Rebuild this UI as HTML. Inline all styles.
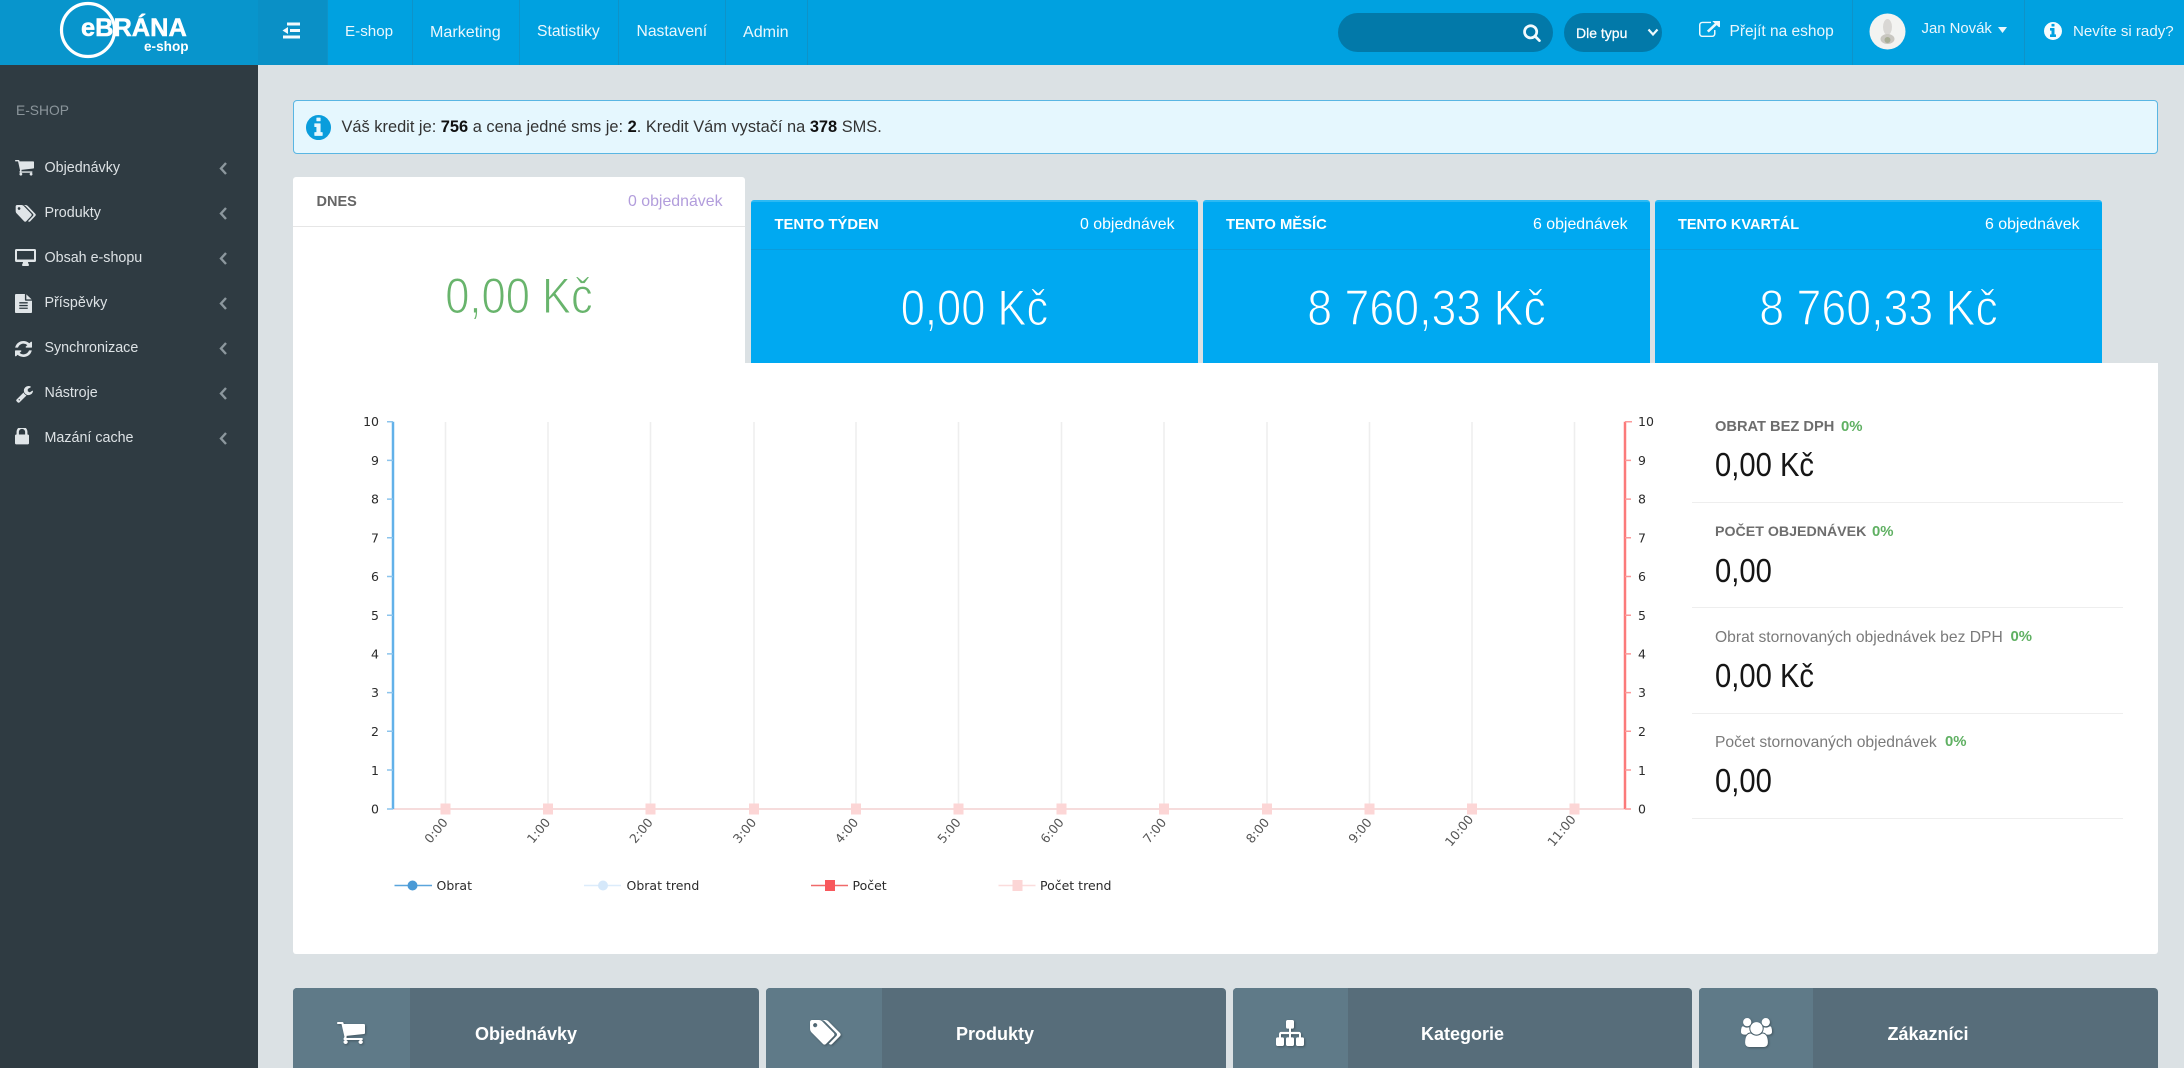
<!DOCTYPE html>
<html lang="cs">
<head>
<meta charset="utf-8">
<title>eBRÁNA e-shop</title>
<style>
html,body{margin:0;padding:0;width:2184px;height:1068px;overflow:hidden;background:#dbe1e4;font-family:"Liberation Sans",Arial,sans-serif;}
.b{position:absolute;box-sizing:border-box;}
.t{position:absolute;white-space:nowrap;line-height:1;}
.w{color:#fff;}
svg.i{position:absolute;display:block;}
.side{color:#dde2e5;font-size:14.3px;left:44.5px;}
.stat{font-size:14.4px;font-weight:bold;color:#6d6d6d;left:1715px;}
.stat2{font-size:15.65px;color:#7a7a7a;left:1715px;}
.pct{font-size:14.9px;font-weight:bold;color:#5fb062;}
.val{font-size:33px;color:#151515;left:1715px;transform:scaleX(.885);transform-origin:left center;}
.big{font-size:50px;text-align:center;}
.cap{font-size:14.8px;font-weight:bold;color:#fff;}
.cnt{font-size:15.9px;color:#fff;}
.tab{font-size:15.7px;color:#eaf7fd;top:24px;}
.sep{position:absolute;top:0;height:65px;width:1px;background:#0e93c8;}
.lbl{font-size:18px;font-weight:bold;color:#fff;top:1025px;}
.blue{background:#00a9f1;border-top:2px solid #2cb9f3;border-radius:3px 3px 0 0;}
.hline{position:absolute;height:1px;background:#0a9cdc;}
.sline{position:absolute;left:1692px;width:431px;height:1px;background:#eeeeee;}
</style>
</head>
<body>

<!-- header -->
<div class="b" style="left:0;top:0;width:2184px;height:65px;background:#00a1e0;"></div>
<div class="b" style="left:0;top:0;width:258px;height:65px;background:#0895cc;"></div>
<div class="b" style="left:258px;top:0;width:69px;height:65px;background:#0a90c6;"></div>
<svg class="i" style="left:55px;top:0;" width="70" height="62" viewBox="0 0 70 62"><circle cx="33" cy="30" r="26.5" fill="none" stroke="#fff" stroke-width="3.2"/></svg>
<div class="t w" style="left:81px;top:15.500px;font-size:25.4px;font-weight:bold;-webkit-text-stroke:.5px #fff;">eBRÁNA</div>
<div class="t w" style="left:144px;top:39.5px;font-size:13.6px;font-weight:bold;">e-shop</div>
<svg class="i" style="left:282px;top:22px;" width="19" height="17" viewBox="0 0 19 17" fill="#f2fafd"><rect x="5" y="0.500" width="13" height="3"/><rect x="8" y="7" width="10" height="3"/><rect x="1" y="13.500" width="17" height="3"/><path d="M6 5v7L0.500 8.500z"/></svg>

<div class="sep" style="left:327px"></div><div class="sep" style="left:412px"></div><div class="sep" style="left:519px"></div><div class="sep" style="left:618px"></div><div class="sep" style="left:725px"></div><div class="sep" style="left:807px"></div>
<div class="t tab" style="left:345px;font-size:15.2px;">E-shop</div>
<div class="t tab" style="left:430px;font-size:16.1px;">Marketing</div>
<div class="t tab" style="left:537px;">Statistiky</div>
<div class="t tab" style="left:636.500px;">Nastavení</div>
<div class="t tab" style="left:743px;font-size:16.1px;">Admin</div>

<div class="b" style="left:1338px;top:13px;width:215px;height:39px;border-radius:20px;background:#0279a9;"></div>
<svg class="i" style="left:1522px;top:23px;" width="20" height="19" viewBox="0 0 1792 1792" fill="#f2fafd"><path d="M1216 832q0-185-131.500-316.500t-316.500-131.500-316.500 131.500-131.500 316.500 131.500 316.500 316.500 131.500 316.500-131.500 131.500-316.500zm512 832q0 52-38 90t-90 38q-54 0-90-38l-343-342q-179 124-399 124-143 0-273.500-55.500t-225-150-150-225-55.500-273.500 55.500-273.500 150-225 225-150 273.500-55.500 273.500 55.500 225 150 150 225 55.500 273.500q0 220-124 399l343 343q37 37 37 90z"/></svg>
<div class="b" style="left:1564px;top:13px;width:98px;height:39px;border-radius:20px;background:#0279a9;"></div>
<div class="t w" style="left:1576px;top:26px;font-size:14px;-webkit-text-stroke:.25px #fff;">Dle typu</div>
<svg class="i" style="left:1647px;top:28px;" width="12" height="9" viewBox="0 0 12 9"><path d="M1.500 1.500L6 6.500l4.500-5" fill="none" stroke="#eef8fc" stroke-width="2.200"/></svg>
<svg class="i" style="left:1699px;top:21px;" width="21" height="16" viewBox="0 64 1792 1472" preserveAspectRatio="none" fill="#eef8fc"><path d="M1408 928v320q0 119-84.500 203.500t-203.500 84.500h-832q-119 0-203.500-84.500t-84.500-203.500v-832q0-119 84.500-203.500t203.500-84.500h704q14 0 23 9t9 23v64q0 14-9 23t-23 9h-704q-66 0-113 47t-47 113v832q0 66 47 113t113 47h832q66 0 113-47t47-113v-320q0-14 9-23t23-9h64q14 0 23 9t9 23zm384-864v512q0 26-19 45t-45 19-45-19l-176-176-652 652q-10 10-23 10t-23-10l-114-114q-10-10-10-23t10-23l652-652-176-176q-19-19-19-45t19-45 45-19h512q26 0 45 19t19 45z"/></svg>
<div class="t" style="left:1729.500px;top:24px;font-size:15.5px;color:#eaf7fd;">Přejít na eshop</div>
<div class="sep" style="left:1852px"></div><div class="sep" style="left:2024px"></div>
<svg class="i" style="left:1869px;top:13px;" width="37" height="37" viewBox="0 0 37 37"><circle cx="18.500" cy="18.500" r="18" fill="#f3f3f1"/><ellipse cx="18.500" cy="14" rx="4.500" ry="8" fill="#d9d7d4"/><ellipse cx="18.500" cy="26" rx="7" ry="5" fill="#c9c7c1"/><circle cx="18.500" cy="27" r="3" fill="#a8ad96"/></svg>
<div class="t" style="left:1921.500px;top:21.500px;font-size:14.9px;color:#eaf7fd;">Jan Novák</div>
<svg class="i" style="left:1998px;top:27px;" width="9" height="6" viewBox="0 0 9 6"><path d="M0 0h9L4.500 6z" fill="#eaf7fd"/></svg>
<svg class="i" style="left:2044px;top:22px;" width="18" height="18" viewBox="128 128 1536 1536" fill="#f6fcfe"><path d="M1152 1376v-160q0-14-9-23t-23-9h-96v-512q0-14-9-23t-23-9h-320q-14 0-23 9t-9 23v160q0 14 9 23t23 9h96v320h-96q-14 0-23 9t-9 23v160q0 14 9 23t23 9h448q14 0 23-9t9-23zm-128-896v-160q0-14-9-23t-23-9h-192q-14 0-23 9t-9 23v160q0 14 9 23t23 9h192q14 0 23-9t9-23zm640 416q0 209-103 385.500t-279.500 279.500-385.500 103-385.500-103-279.500-279.500-103-385.500 103-385.500 279.500-279.500 385.500-103 385.500 103 279.500 279.500 103 385.500z"/></svg>
<div class="t" style="left:2073px;top:24px;font-size:15.1px;color:#eaf7fd;">Nevíte si rady?</div>

<!-- sidebar -->
<div class="b" style="left:0;top:65px;width:258px;height:1003px;background:#2f3b42;"></div>
<div class="t" style="left:16px;top:104px;font-size:13.8px;color:#8b959b;">E-SHOP</div>

<svg class="i" style="left:15px;top:160px;" width="19" height="17" viewBox="0 128 1664 1536" preserveAspectRatio="none" fill="#e0e5e8"><path d="M640 1408q0 52-38 90t-90 38-90-38-38-90 38-90 90-38 90 38 38 90zm896 0q0 52-38 90t-90 38-90-38-38-90 38-90 90-38 90 38 38 90zm128-1088v512q0 24-16.500 42.500t-40.500 21.500l-1044 122q13 60 13 70 0 16-24 64h920q26 0 45 19t19 45-19 45-45 19h-1024q-26 0-45-19t-19-45q0-11 8-31.500t16-36 21.500-40 15.500-29.500l-177-823h-204q-26 0-45-19t-19-45 19-45 45-19h256q16 0 28.500 6.500t19.500 15.500 13 24.500 8 26 5.500 29.500 4.500 26h1201q26 0 45 19t19 45z"/></svg>
<div class="t side" style="top:160.500px;">Objednávky</div>
<svg class="i" style="left:15px;top:205px;" width="21" height="17" viewBox="0 128 1984 1536" preserveAspectRatio="none" fill="#e0e5e8"><path d="M512 448q0-53-37.500-90.500t-90.500-37.500-90.500 37.500-37.500 90.500 37.500 90.500 90.500 37.500 90.500-37.500 37.500-90.500zm1067 576q0 53-37 90l-491 492q-39 37-91 37-53 0-90-37l-715-716q-38-37-64.500-101t-26.500-117v-416q0-52 38-90t90-38h416q53 0 117 26.500t102 64.500l715 714q37 39 37 91zm384 0q0 53-37 90l-491 492q-39 37-91 37-36 0-59-14t-53-45l470-470q37-37 37-90 0-52-37-91l-715-714q-38-38-102-64.500t-117-26.500h224q53 0 117 26.500t102 64.500l715 714q37 39 37 91z"/></svg>
<div class="t side" style="top:205.500px;">Produkty</div>
<svg class="i" style="left:15px;top:249px;" width="21" height="17" viewBox="0 0 21 17" fill="#e0e5e8"><path fill-rule="evenodd" d="M1.500 0h18A1.500 1.500 0 0 1 21 1.500v10a1.500 1.500 0 0 1-1.500 1.500H13c0 1.500 1 2.300 1 3a1 1 0 0 1-1 1H8a1 1 0 0 1-1-1c0-.7 1-1.500 1-3H1.500A1.500 1.500 0 0 1 0 11.500v-10A1.500 1.500 0 0 1 1.500 0zM2 2v8.500h17V2z"/></svg>
<div class="t side" style="top:250.500px;">Obsah e-shopu</div>
<svg class="i" style="left:15px;top:294px;" width="17" height="19" viewBox="128 0 1536 1792" preserveAspectRatio="none" fill="#e0e5e8"><path d="M1596 476q14 14 28 36h-472v-472q22 14 36 28zm-476 164h544v1056q0 40-28 68t-68 28h-1344q-40 0-68-28t-28-68v-1600q0-40 28-68t68-28h800v544q0 40 28 68t68 28zm160 736v-64q0-14-9-23t-23-9h-704q-14 0-23 9t-9 23v64q0 14 9 23t23 9h704q14 0 23-9t9-23zm0-256v-64q0-14-9-23t-23-9h-704q-14 0-23 9t-9 23v64q0 14 9 23t23 9h704q14 0 23-9t9-23zm0-256v-64q0-14-9-23t-23-9h-704q-14 0-23 9t-9 23v64q0 14 9 23t23 9h704q14 0 23-9t9-23z"/></svg>
<div class="t side" style="top:296px;">Příspěvky</div>
<svg class="i" style="left:15px;top:341px;" width="17" height="16" viewBox="128 128 1536 1536" preserveAspectRatio="none" fill="#e0e5e8"><path d="M1639 1056q0 5-1 7-64 268-268 434.500t-478 166.500q-146 0-282.500-55t-243.500-157l-129 129q-19 19-45 19t-45-19-19-45v-448q0-26 19-45t45-19h448q26 0 45 19t19 45-19 45l-137 137q71 66 161 102t187 36q134 0 250-65t186-179q11-17 53-117 8-23 30-23h192q13 0 22.500 9.500t9.500 22.500zm25-800v448q0 26-19 45t-45 19h-448q-26 0-45-19t-19-45 19-45l138-138q-148-137-349-137-134 0-250 65t-186 179q-11 17-53 117-8 23-30 23h-199q-13 0-22.500-9.500t-9.500-22.500v-7q65-268 270-434.500t480-166.500q146 0 284 55.500t245 156.500l130-129q19-19 45-19t45 19 19 45z"/></svg>
<div class="t side" style="top:341px;">Synchronizace</div>
<svg class="i" style="left:16px;top:386px;" width="17" height="17" viewBox="64 128 1664 1664" fill="#e0e5e8"><path d="M448 1472q0-26-19-45t-45-19-45 19-19 45 19 45 45 19 45-19 19-45zm644-420l-682 682q-37 37-90 37-52 0-91-37l-106-108q-38-36-38-90 0-53 38-91l681-681q39 98 114.500 173.500t173.500 114.500zm634-435q0 39-23 106-47 134-164.500 217.500t-258.500 83.500q-185 0-316.500-131.500t-131.500-316.500 131.500-316.500 316.500-131.500q58 0 121.500 16.500t107.500 46.500q16 11 16 28t-16 28l-293 169v224l193 107q5-3 79-48.500t135.500-81 70.500-35.500q15 0 23.500 10t8.500 25z"/></svg>
<div class="t side" style="top:386px;">Nástroje</div>
<svg class="i" style="left:15px;top:428px;" width="14" height="18" viewBox="320 256 1152 1408" preserveAspectRatio="none" fill="#e0e5e8"><path d="M640 768h512v-192q0-106-75-181t-181-75-181 75-75 181v192zm832 96v576q0 40-28 68t-68 28h-960q-40 0-68-28t-28-68v-576q0-40 28-68t68-28h32v-192q0-184 132-316t316-132 316 132 132 316v192h32q40 0 68 28t28 68z"/></svg>
<div class="t side" style="top:431px;">Mazání cache</div>

<svg class="i" style="left:218px;top:160px;" width="12" height="290" viewBox="0 0 12 290" fill="none" stroke="#8c979d" stroke-width="2.400">
<path d="M8 3L3 8.500l5 5.500M8 48L3 53.500l5 5.500M8 93L3 98.500l5 5.500M8 138L3 143.500l5 5.500M8 183L3 188.500l5 5.500M8 228L3 233.500l5 5.500M8 273L3 278.500l5 5.500"/></svg>

<!-- alert -->
<div class="b" style="left:293px;top:100px;width:1865px;height:54px;background:#e5f7fe;border:1px solid #59b6e3;border-radius:4px;"></div>
<svg class="i" style="left:306px;top:114.500px;" width="25" height="25" viewBox="128 128 1536 1536" fill="#0a9ddc"><path d="M1152 1376v-160q0-14-9-23t-23-9h-96v-512q0-14-9-23t-23-9h-320q-14 0-23 9t-9 23v160q0 14 9 23t23 9h96v320h-96q-14 0-23 9t-9 23v160q0 14 9 23t23 9h448q14 0 23-9t9-23zm-128-896v-160q0-14-9-23t-23-9h-192q-14 0-23 9t-9 23v160q0 14 9 23t23 9h192q14 0 23-9t9-23zm640 416q0 209-103 385.500t-279.500 279.500-385.500 103-385.500-103-279.500-279.500-103-385.500 103-385.500 279.500-279.500 385.500-103 385.500 103 279.500 279.500 103 385.500z"/></svg>
<div class="t" style="left:341.500px;top:119px;font-size:16.4px;color:#333;">Váš kredit je: <b style="color:#111">756</b> a cena jedné sms je: <b style="color:#111">2</b>. Kredit Vám vystačí na <b style="color:#111">378</b> SMS.</div>

<!-- main white panel -->
<div class="b" style="left:293px;top:363px;width:1865px;height:591px;background:#fff;border-radius:0 0 3px 3px;"></div>

<!-- DNES -->
<div class="b" style="left:293px;top:177px;width:452px;height:190px;background:#fff;border-radius:3px 3px 0 0;"></div>
<div class="b" style="left:293px;top:226px;width:452px;height:1px;background:#e6e6e6;"></div>
<div class="t" style="left:316.500px;top:194.500px;font-size:14.500px;font-weight:bold;color:#666;">DNES</div>
<div class="t" style="left:628px;top:194px;font-size:15.9px;color:#b29ddc;">0 objednávek</div>
<div class="t big" style="left:293px;width:452px;top:270.500px;color:#68b46c;transform:scaleX(.87);-webkit-text-stroke:1.1px #fff;">0,00 Kč</div>

<!-- TENTO TÝDEN -->
<div class="b blue" style="left:751px;top:200px;width:446.500px;height:163px;"></div>
<div class="hline" style="left:751px;top:249px;width:446.500px;"></div>
<div class="t cap" style="left:774.500px;top:218px;">TENTO TÝDEN</div>
<div class="t cnt" style="left:1080px;top:217px;">0 objednávek</div>
<div class="t big w" style="left:751px;width:447px;top:282.500px;transform:scaleX(.87);-webkit-text-stroke:1.1px #00a9f1;">0,00 Kč</div>

<!-- TENTO MĚSÍC -->
<div class="b blue" style="left:1203px;top:200px;width:446.500px;height:163px;"></div>
<div class="hline" style="left:1203px;top:249px;width:446.500px;"></div>
<div class="t cap" style="left:1226px;top:218px;">TENTO MĚSÍC</div>
<div class="t cnt" style="left:1533px;top:217px;">6 objednávek</div>
<div class="t big w" style="left:1203px;width:447px;top:282.500px;transform:scaleX(.894);-webkit-text-stroke:1.1px #00a9f1;">8 760,33 Kč</div>

<!-- TENTO KVARTÁL -->
<div class="b blue" style="left:1655px;top:200px;width:447px;height:163px;"></div>
<div class="hline" style="left:1655px;top:249px;width:447px;"></div>
<div class="t cap" style="left:1678px;top:218px;font-size:14.500px;">TENTO KVARTÁL</div>
<div class="t cnt" style="left:1985px;top:217px;">6 objednávek</div>
<div class="t big w" style="left:1655px;width:447px;top:282.500px;transform:scaleX(.894);-webkit-text-stroke:1.1px #00a9f1;">8 760,33 Kč</div>

<!-- chart -->
<svg class="i" style="left:340px;top:400px;" width="1330" height="510" viewBox="340 400 1330 510" font-family="'DejaVu Sans',sans-serif" font-size="12.5">
<g stroke="#eeeeee" stroke-width="1.500">
<path d="M445.500 422V809M548 422V809M650.500 422V809M754 422V809M856 422V809M958.500 422V809M1061.500 422V809M1164 422V809M1267 422V809M1369.500 422V809M1472 422V809M1574.500 422V809"/>
</g>
<path d="M393 809H1625" stroke="#f6dcdc" stroke-width="2"/>
<g fill="#fcd6d6">
<rect x="440.500" y="803.500" width="10" height="11"/><rect x="543" y="803.500" width="10" height="11"/><rect x="645.500" y="803.500" width="10" height="11"/><rect x="749" y="803.500" width="10" height="11"/><rect x="851" y="803.500" width="10" height="11"/><rect x="953.500" y="803.500" width="10" height="11"/><rect x="1056.500" y="803.500" width="10" height="11"/><rect x="1159" y="803.500" width="10" height="11"/><rect x="1262" y="803.500" width="10" height="11"/><rect x="1364.500" y="803.500" width="10" height="11"/><rect x="1467" y="803.500" width="10" height="11"/><rect x="1569.500" y="803.500" width="10" height="11"/>
</g>
<path d="M393 421.700V809" stroke="#62b1e9" stroke-width="2.500" fill="none"/>
<path d="M387 421.700h6M387 460.400h6M387 499.100h6M387 537.800h6M387 576.500h6M387 615.200h6M387 653.900h6M387 692.600h6M387 731.300h6M387 770h6M387 809h6" stroke="#8cc4ec" stroke-width="1.500" fill="none"/>
<path d="M1625 421.700V809" stroke="#fb7a7a" stroke-width="2.500" fill="none"/>
<path d="M1625 421.700h7M1625 460.400h6M1625 499.100h6M1625 537.800h6M1625 576.500h6M1625 615.200h6M1625 653.900h6M1625 692.600h6M1625 731.300h6M1625 770h6M1625 809h6" stroke="#fb9a9a" stroke-width="1.500" fill="none"/>
<g fill="#2b2b2b" text-anchor="end">
<text x="379" y="426">10</text><text x="379" y="465">9</text><text x="379" y="503.500">8</text><text x="379" y="542.500">7</text><text x="379" y="581">6</text><text x="379" y="620">5</text><text x="379" y="658.500">4</text><text x="379" y="697">3</text><text x="379" y="736">2</text><text x="379" y="775">1</text><text x="379" y="813.500">0</text>
</g>
<g fill="#2b2b2b">
<text x="1638" y="426">10</text><text x="1638" y="465">9</text><text x="1638" y="503.500">8</text><text x="1638" y="542.500">7</text><text x="1638" y="581">6</text><text x="1638" y="620">5</text><text x="1638" y="658.500">4</text><text x="1638" y="697">3</text><text x="1638" y="736">2</text><text x="1638" y="775">1</text><text x="1638" y="813.500">0</text>
</g>
<g fill="#555" text-anchor="middle">
<text transform="translate(436 830.500) rotate(-50)" y="4.500">0:00</text>
<text transform="translate(538.500 830.500) rotate(-50)" y="4.500">1:00</text>
<text transform="translate(641 830.500) rotate(-50)" y="4.500">2:00</text>
<text transform="translate(744.500 830.500) rotate(-50)" y="4.500">3:00</text>
<text transform="translate(846.500 830.500) rotate(-50)" y="4.500">4:00</text>
<text transform="translate(949 830.500) rotate(-50)" y="4.500">5:00</text>
<text transform="translate(1052 830.500) rotate(-50)" y="4.500">6:00</text>
<text transform="translate(1154.500 830.500) rotate(-50)" y="4.500">7:00</text>
<text transform="translate(1257.500 830.500) rotate(-50)" y="4.500">8:00</text>
<text transform="translate(1360 830.500) rotate(-50)" y="4.500">9:00</text>
<text transform="translate(1459 830.500) rotate(-50)" y="4.500">10:00</text>
<text transform="translate(1561.500 830.500) rotate(-50)" y="4.500">11:00</text>
</g>
<path d="M394.500 885.500h37.500" stroke="#5aa5dc" stroke-width="1.500"/><circle cx="412.500" cy="885.500" r="5" fill="#4a9ad6"/>
<text x="436.500" y="890" fill="#2b2b2b">Obrat</text>
<path d="M584 885.500h37" stroke="#dcecfb" stroke-width="1.500"/><circle cx="603" cy="885.500" r="5" fill="#d5e8fa"/>
<text x="626.500" y="890" fill="#2b2b2b">Obrat trend</text>
<path d="M811 885.500h37" stroke="#f06a6a" stroke-width="1.500"/><rect x="825" y="880" width="10" height="11" fill="#f8585c"/>
<text x="852.500" y="890" fill="#2b2b2b">Počet</text>
<path d="M998.500 885.500h37" stroke="#fbdcdc" stroke-width="1.500"/><rect x="1012.500" y="880" width="10" height="11" fill="#fcd6d6"/>
<text x="1040" y="890" fill="#2b2b2b">Počet trend</text>
</svg>

<!-- stats -->
<div class="t stat" style="top:419.500px;font-size:14.650px;">OBRAT BEZ DPH</div>
<div class="t pct" style="left:1841px;top:419.500px;">0%</div>
<div class="t val" style="top:448px;">0,00 Kč</div>
<div class="sline" style="top:502px;"></div>
<div class="t stat" style="top:524.500px;font-size:14.200px;">POČET OBJEDNÁVEK</div>
<div class="t pct" style="left:1872px;top:524.500px;">0%</div>
<div class="t val" style="top:554px;">0,00</div>
<div class="sline" style="top:607px;"></div>
<div class="t stat2" style="top:629.500px;">Obrat stornovaných objednávek bez DPH</div>
<div class="t pct" style="left:2010.500px;top:630px;">0%</div>
<div class="t val" style="top:659px;">0,00 Kč</div>
<div class="sline" style="top:713px;"></div>
<div class="t stat2" style="top:734.500px;">Počet stornovaných objednávek</div>
<div class="t pct" style="left:1945px;top:735px;">0%</div>
<div class="t val" style="top:764px;">0,00</div>
<div class="sline" style="top:818px;"></div>

<!-- bottom cards -->
<div class="b" style="left:293px;top:988px;width:466px;height:80px;background:#576d7a;border-radius:4px 4px 0 0;overflow:hidden;"><div style="width:117px;height:80px;background:#5f7a88;"></div></div>
<div class="b" style="left:766px;top:988px;width:460px;height:80px;background:#576d7a;border-radius:4px 4px 0 0;overflow:hidden;"><div style="width:116px;height:80px;background:#5f7a88;"></div></div>
<div class="b" style="left:1233px;top:988px;width:459px;height:80px;background:#576d7a;border-radius:4px 4px 0 0;overflow:hidden;"><div style="width:115px;height:80px;background:#5f7a88;"></div></div>
<div class="b" style="left:1699px;top:988px;width:459px;height:80px;background:#576d7a;border-radius:4px 4px 0 0;overflow:hidden;"><div style="width:114px;height:80px;background:#5f7a88;"></div></div>

<svg class="i" style="left:337px;top:1022px;filter:drop-shadow(1px 1px 1px rgba(0,0,0,.3));" width="28" height="24" viewBox="0 128 1664 1536" preserveAspectRatio="none" fill="#fff"><path d="M640 1408q0 52-38 90t-90 38-90-38-38-90 38-90 90-38 90 38 38 90zm896 0q0 52-38 90t-90 38-90-38-38-90 38-90 90-38 90 38 38 90zm128-1088v512q0 24-16.500 42.500t-40.500 21.500l-1044 122q13 60 13 70 0 16-24 64h920q26 0 45 19t19 45-19 45-45 19h-1024q-26 0-45-19t-19-45q0-11 8-31.500t16-36 21.500-40 15.500-29.500l-177-823h-204q-26 0-45-19t-19-45 19-45 45-19h256q16 0 28.500 6.500t19.500 15.500 13 24.500 8 26 5.500 29.500 4.500 26h1201q26 0 45 19t19 45z"/></svg>
<svg class="i" style="left:809px;top:1020px;filter:drop-shadow(1px 1px 1px rgba(0,0,0,.3));" width="32" height="25" viewBox="0 128 1984 1536" preserveAspectRatio="none" fill="#fff"><path d="M512 448q0-53-37.500-90.500t-90.500-37.500-90.500 37.500-37.500 90.500 37.500 90.500 90.500 37.500 90.500-37.500 37.500-90.500zm1067 576q0 53-37 90l-491 492q-39 37-91 37-53 0-90-37l-715-716q-38-37-64.500-101t-26.500-117v-416q0-52 38-90t90-38h416q53 0 117 26.500t102 64.500l715 714q37 39 37 91zm384 0q0 53-37 90l-491 492q-39 37-91 37-36 0-59-14t-53-45l470-470q37-37 37-90 0-52-37-91l-715-714q-38-38-102-64.500t-117-26.500h224q53 0 117 26.500t102 64.500l715 714q37 39 37 91z"/></svg>
<svg class="i" style="left:1276px;top:1019.500px;filter:drop-shadow(1px 1px 1px rgba(0,0,0,.3));" width="28" height="26" viewBox="0 128 1792 1536" preserveAspectRatio="none" fill="#fff"><path d="M1792 1248v320q0 40-28 68t-68 28h-320q-40 0-68-28t-28-68v-320q0-40 28-68t68-28h96v-192h-512v192h96q40 0 68 28t28 68v320q0 40-28 68t-68 28h-320q-40 0-68-28t-28-68v-320q0-40 28-68t68-28h96v-192h-512v192h96q40 0 68 28t28 68v320q0 40-28 68t-68 28h-320q-40 0-68-28t-28-68v-320q0-40 28-68t68-28h96v-192q0-52 38-90t90-38h512v-192h-96q-40 0-68-28t-28-68v-320q0-40 28-68t68-28h320q40 0 68 28t28 68v320q0 40-28 68t-68 28h-96v192h512q52 0 90 38t38 90v192h96q40 0 68 28t28 68z"/></svg>
<svg class="i" style="left:1741px;top:1018px;filter:drop-shadow(1px 1px 1px rgba(0,0,0,.3));" width="31" height="29" viewBox="0 0 1920 1792" preserveAspectRatio="none" fill="#fff"><path d="M593 896q-162 5-265 128h-134q-82 0-138-40.500t-56-118.500q0-353 124-353 6 0 43.500 21t97.500 42.500 119 21.500q67 0 133-23-5 37-5 66 0 139 81 256zm1071 637q0 120-73 189.500t-194 69.500h-874q-121 0-194-69.500t-73-189.500q0-53 3.500-103.500t14-109 26.500-108.500 43-97.500 62-81 85.500-53.500 111.500-20q10 0 43 21.500t73 48 107 48 135 21.500 135-21.500 107-48 73-48 43-21.500q61 0 111.500 20t85.500 53.500 62 81 43 97.500 26.500 108.500 14 109 3.500 103.500zm-1024-1277q0 106-75 181t-181 75-181-75-75-181 75-181 181-75 181 75 75 181zm704 384q0 159-112.500 271.500t-271.500 112.500-271.500-112.500-112.500-271.500 112.500-271.500 271.500-112.500 271.500 112.500 112.500 271.500zm576 225q0 78-56 118.500t-138 40.500h-134q-103-123-265-128 81-117 81-256 0-29-5-66 66 23 133 23 59 0 119-21.500t97.500-42.500 43.500-21q124 0 124 353zm-128-609q0 106-75 181t-181 75-181-75-75-181 75-181 181-75 181 75 75 181z"/></svg>

<div class="t lbl" style="left:475px;">Objednávky</div>
<div class="t lbl" style="left:956px;">Produkty</div>
<div class="t lbl" style="left:1421px;">Kategorie</div>
<div class="t lbl" style="left:1887.500px;">Zákazníci</div>

</body>
</html>
